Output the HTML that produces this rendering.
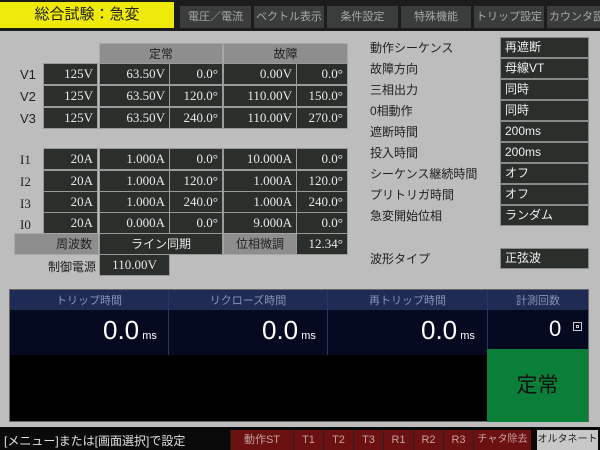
<!DOCTYPE html><html><head><meta charset="utf-8"><style>
*{margin:0;padding:0;box-sizing:border-box}
body{width:600px;height:450px;background:#bdbdbd;position:relative;overflow:hidden;font-family:"Liberation Sans","Noto Sans CJK JP",sans-serif;font-size:12px;color:#222}
.a{position:absolute;white-space:nowrap}
.d{position:absolute;background:#2b2f2c;color:#e8e8e8;border:1px solid #9a9a9a;height:22px;line-height:20px;text-align:right;padding-right:4px;font-family:"Liberation Serif","Noto Sans CJK JP",serif;font-size:13px;white-space:nowrap}
.g{position:absolute;background:#8e8e8e;color:#222;height:22px;line-height:21px;text-align:center;border:1px solid #a8a8a8;white-space:nowrap}
.l{position:absolute;font-family:"Liberation Sans",sans-serif;font-size:13px;color:#222}
.rl{position:absolute;left:370px;font-size:12px;color:#222;white-space:nowrap}
.rv{position:absolute;left:500px;width:89px;height:21px;background:#2b2f2c;color:#eee;border:1px solid #8a8a8a;padding-left:4px;line-height:19px;font-size:12px;white-space:nowrap}
.tab{position:absolute;top:6px;height:22px;background:#3a3d3b;color:#a8a8a8;font-size:11px;line-height:22px;text-align:center;white-space:nowrap;overflow:hidden}
.b{position:absolute;top:430px;height:20px;background:#6b1112;color:#c9a0a0;font-size:11px;line-height:20px;text-align:center;border-left:1px solid #222;white-space:nowrap}
</style></head><body>
<div class="a" style="left:0;top:0;width:600px;height:31px;background:#1c1c1c"></div>
<div class="a" style="left:0;top:2px;width:174px;height:26px;background:#f0ea0a;font-size:15px;line-height:26px;text-align:center;color:#222">総合試験：急変</div>
<div class="tab" style="left:180px;width:71px">電圧／電流</div>
<div class="tab" style="left:254px;width:70px">ベクトル表示</div>
<div class="tab" style="left:327px;width:71px">条件設定</div>
<div class="tab" style="left:401px;width:70px">特殊機能</div>
<div class="tab" style="left:474px;width:70px">トリップ設定</div>
<div class="tab" style="left:547px;width:60px;text-align:left;padding-left:2px">カウンタ設定</div>

<div class="g" style="left:99px;top:43px;width:124px;height:21px">定常</div>
<div class="g" style="left:223px;top:43px;width:125px;height:21px">故障</div>

<div class="l" style="left:20px;top:67px">V1</div>
<div class="l" style="left:20px;top:89px">V2</div>
<div class="l" style="left:20px;top:111px">V3</div>
<div class="d" style="left:43px;top:63px;width:55px">125V</div>
<div class="d" style="left:99px;top:63px;width:71px">63.50V</div>
<div class="d" style="left:169px;top:63px;width:54px">0.0°</div>
<div class="d" style="left:223px;top:63px;width:74px">0.00V</div>
<div class="d" style="left:296px;top:63px;width:52px">0.0°</div>
<div class="d" style="left:43px;top:85px;width:55px">125V</div>
<div class="d" style="left:99px;top:85px;width:71px">63.50V</div>
<div class="d" style="left:169px;top:85px;width:54px">120.0°</div>
<div class="d" style="left:223px;top:85px;width:74px">110.00V</div>
<div class="d" style="left:296px;top:85px;width:52px">150.0°</div>
<div class="d" style="left:43px;top:107px;width:55px">125V</div>
<div class="d" style="left:99px;top:107px;width:71px">63.50V</div>
<div class="d" style="left:169px;top:107px;width:54px">240.0°</div>
<div class="d" style="left:223px;top:107px;width:74px">110.00V</div>
<div class="d" style="left:296px;top:107px;width:52px">270.0°</div>

<div class="l" style="left:20px;top:152px;font-family:'Liberation Serif',serif">I1</div>
<div class="l" style="left:20px;top:174px;font-family:'Liberation Serif',serif">I2</div>
<div class="l" style="left:20px;top:196px;font-family:'Liberation Serif',serif">I3</div>
<div class="l" style="left:20px;top:217px;font-family:'Liberation Serif',serif">I0</div>
<div class="d" style="left:43px;top:148px;width:55px">20A</div>
<div class="d" style="left:99px;top:148px;width:71px">1.000A</div>
<div class="d" style="left:169px;top:148px;width:54px">0.0°</div>
<div class="d" style="left:223px;top:148px;width:74px">10.000A</div>
<div class="d" style="left:296px;top:148px;width:52px">0.0°</div>
<div class="d" style="left:43px;top:170px;width:55px">20A</div>
<div class="d" style="left:99px;top:170px;width:71px">1.000A</div>
<div class="d" style="left:169px;top:170px;width:54px">120.0°</div>
<div class="d" style="left:223px;top:170px;width:74px">1.000A</div>
<div class="d" style="left:296px;top:170px;width:52px">120.0°</div>
<div class="d" style="left:43px;top:191px;width:55px">20A</div>
<div class="d" style="left:99px;top:191px;width:71px">1.000A</div>
<div class="d" style="left:169px;top:191px;width:54px">240.0°</div>
<div class="d" style="left:223px;top:191px;width:74px">1.000A</div>
<div class="d" style="left:296px;top:191px;width:52px">240.0°</div>
<div class="d" style="left:43px;top:212px;width:55px">20A</div>
<div class="d" style="left:99px;top:212px;width:71px">0.000A</div>
<div class="d" style="left:169px;top:212px;width:54px">0.0°</div>
<div class="d" style="left:223px;top:212px;width:74px">9.000A</div>
<div class="d" style="left:296px;top:212px;width:52px">0.0°</div>

<div class="g" style="left:14px;top:233px;width:85px;text-align:right;padding-right:6px">周波数</div>
<div class="d" style="left:99px;top:233px;width:124px;text-align:center;padding:0;font-family:'Liberation Sans','Noto Sans CJK JP',sans-serif;font-size:12px">ライン同期</div>
<div class="g" style="left:223px;top:233px;width:74px">位相微調</div>
<div class="d" style="left:296px;top:233px;width:52px">12.34°</div>
<div class="a" style="left:48px;top:258px;font-size:12px">制御電源</div>
<div class="d" style="left:99px;top:254px;width:71px;text-align:center;padding:0">110.00V</div>

<div class="rl" style="top:39px">動作シーケンス</div>
<div class="rl" style="top:60px">故障方向</div>
<div class="rl" style="top:81px">三相出力</div>
<div class="rl" style="top:102px">0相動作</div>
<div class="rl" style="top:123px">遮断時間</div>
<div class="rl" style="top:144px">投入時間</div>
<div class="rl" style="top:165px">シーケンス継続時間</div>
<div class="rl" style="top:186px">プリトリガ時間</div>
<div class="rl" style="top:207px">急変開始位相</div>
<div class="rl" style="top:250px">波形タイプ</div>
<div class="rv" style="top:37px">再遮断</div>
<div class="rv" style="top:58px">母線VT</div>
<div class="rv" style="top:79px">同時</div>
<div class="rv" style="top:100px">同時</div>
<div class="rv" style="top:121px">200ms</div>
<div class="rv" style="top:142px">200ms</div>
<div class="rv" style="top:163px">オフ</div>
<div class="rv" style="top:184px">オフ</div>
<div class="rv" style="top:205px">ランダム</div>
<div class="rv" style="top:248px">正弦波</div>

<div class="a" style="left:9px;top:289px;width:580px;height:133px;background:#000;border:1px solid #666"></div>
<div class="a" style="left:10px;top:290px;width:578px;height:20px;background:#1f2a55"></div>
<div class="a" style="left:10px;top:310px;width:578px;height:45px;background:#050a20"></div>
<div class="a" style="left:168px;top:290px;width:1px;height:65px;background:#2a3560"></div>
<div class="a" style="left:327px;top:290px;width:1px;height:65px;background:#2a3560"></div>
<div class="a" style="left:487px;top:290px;width:1px;height:65px;background:#2a3560"></div>
<div class="a" style="left:10px;top:292px;width:158px;text-align:center;color:#8a93b5;font-size:11px">トリップ時間</div>
<div class="a" style="left:169px;top:292px;width:158px;text-align:center;color:#8a93b5;font-size:11px">リクローズ時間</div>
<div class="a" style="left:328px;top:292px;width:159px;text-align:center;color:#8a93b5;font-size:11px">再トリップ時間</div>
<div class="a" style="left:488px;top:292px;width:100px;text-align:center;color:#8a93b5;font-size:11px">計測回数</div>
<div class="a" style="left:103px;top:315px;color:#fff;font-size:26px;line-height:30px">0.0<span style="font-size:11px"> ms</span></div>
<div class="a" style="left:262px;top:315px;color:#fff;font-size:26px;line-height:30px">0.0<span style="font-size:11px"> ms</span></div>
<div class="a" style="left:421px;top:315px;color:#fff;font-size:26px;line-height:30px">0.0<span style="font-size:11px"> ms</span></div>
<div class="a" style="left:549px;top:315px;color:#fff;font-size:22px;line-height:28px">0</div>
<div class="a" style="left:573px;top:322px;width:9px;height:9px;border:1px solid #ccc"><div style="margin:2px;width:3px;height:3px;border:1px solid #ccc"></div></div>
<div class="a" style="left:487px;top:349px;width:101px;height:73px;background:#0a7f3a;color:#111;font-size:21px;line-height:73px;text-align:center">定常</div>

<div class="a" style="left:0;top:427px;width:600px;height:23px;background:#0a0a0a"></div>
<div class="a" style="left:4px;top:432px;color:#e0e0e0;font-size:12px">[メニュー]または[画面選択]で設定</div>
<div class="b" style="left:230px;width:63px">動作ST</div>
<div class="b" style="left:293px;width:30px">T1</div>
<div class="b" style="left:323px;width:30px">T2</div>
<div class="b" style="left:353px;width:30px">T3</div>
<div class="b" style="left:383px;width:30px">R1</div>
<div class="b" style="left:413px;width:30px">R2</div>
<div class="b" style="left:443px;width:30px">R3</div>
<div class="b" style="left:473px;width:58px;font-size:10px">チャタ除去</div>
<div class="a" style="left:537px;top:430px;width:61px;height:20px;background:#c8c8c8;color:#222;font-size:10px;line-height:20px;text-align:center">オルタネート</div>
</body></html>
